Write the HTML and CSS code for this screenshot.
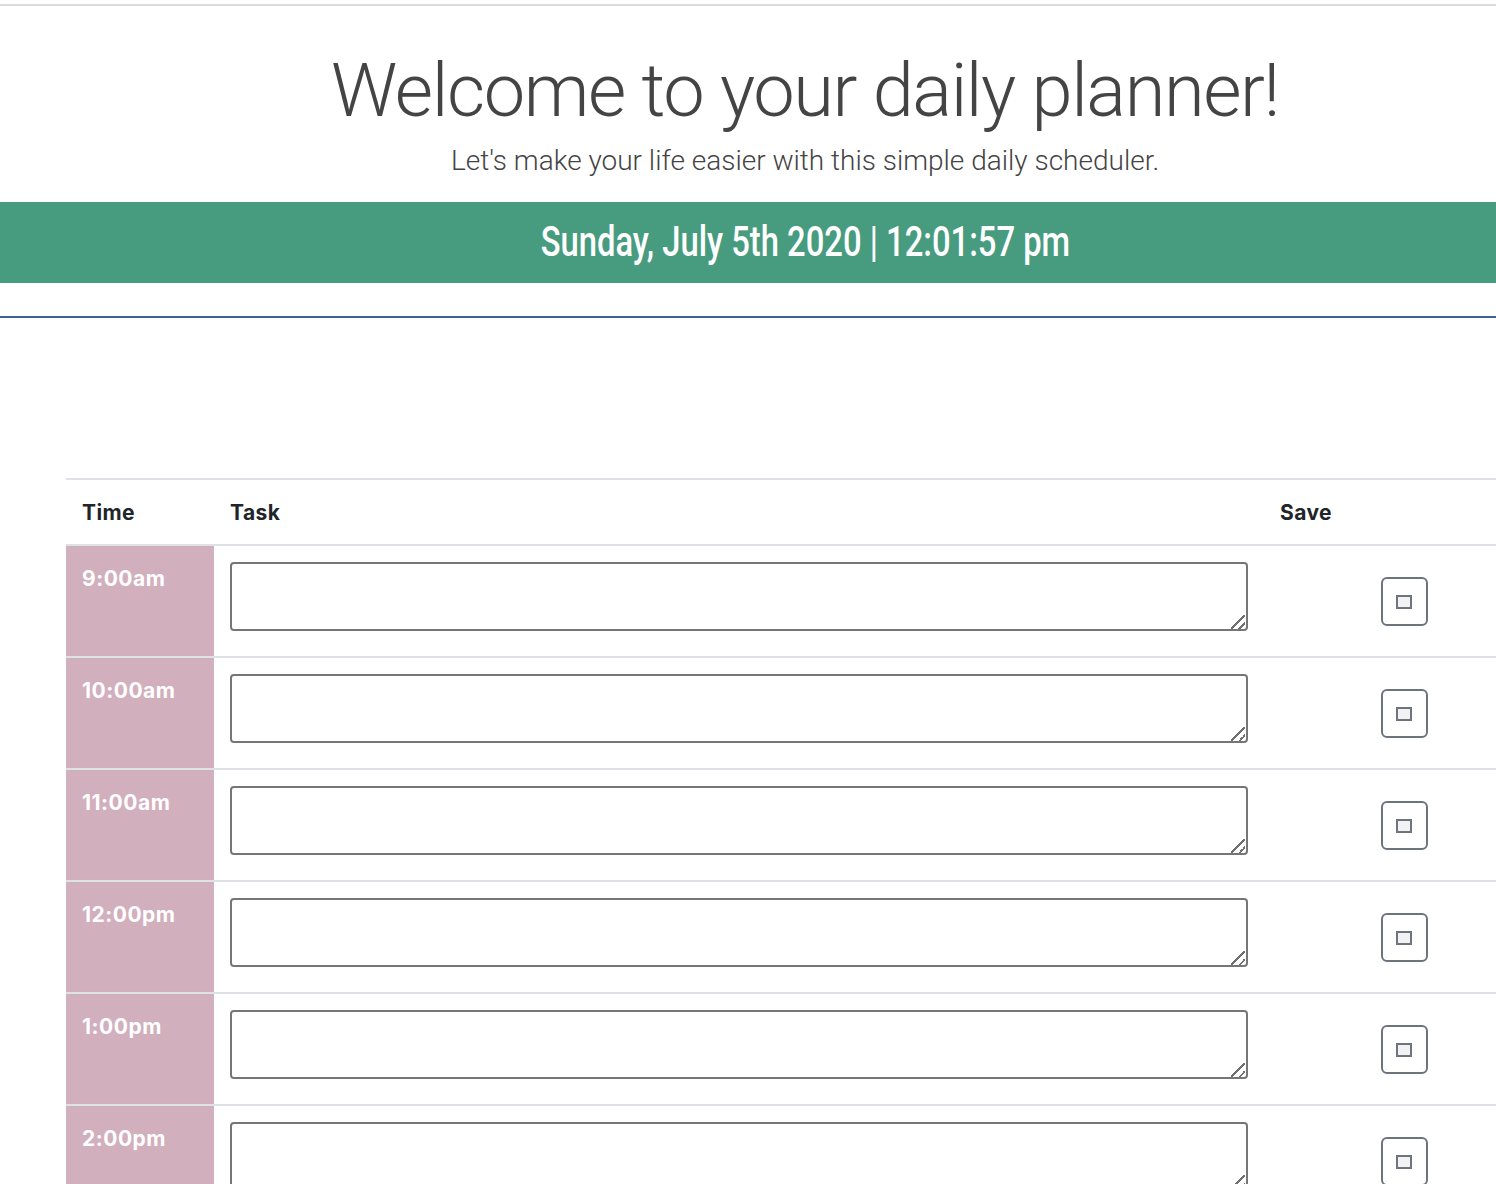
FILE: index.html
```html
<!DOCTYPE html>
<html lang="en">
<head>
<meta charset="utf-8">
<title>Daily Planner</title>
<link rel="stylesheet" href="styles.css">
</head>
<body>
<div class="page">
<div class="topline"></div>
<header class="jumbo">
  <h1 class="title">Welcome to your daily planner!</h1>
  <p class="lead">Let's make your life easier with this simple daily scheduler.</p>
</header>
<div class="datebar"><span class="datetext">Sunday, July 5th 2020 | 12:01:57 pm</span></div>
<hr class="divider">
<main class="planner">
  <table class="table">
    <thead>
      <tr><th class="c-time">Time</th><th class="c-task">Task</th><th class="c-save">Save</th></tr>
    </thead>
    <tbody>
      <tr><td class="hour">9:00am</td><td class="task"><div class="fieldwrap"><textarea class="field"></textarea></div></td><td class="save"><button class="savebtn"><span class="ico"></span></button></td></tr>
      <tr><td class="hour">10:00am</td><td class="task"><div class="fieldwrap"><textarea class="field"></textarea></div></td><td class="save"><button class="savebtn"><span class="ico"></span></button></td></tr>
      <tr><td class="hour">11:00am</td><td class="task"><div class="fieldwrap"><textarea class="field"></textarea></div></td><td class="save"><button class="savebtn"><span class="ico"></span></button></td></tr>
      <tr><td class="hour">12:00pm</td><td class="task"><div class="fieldwrap"><textarea class="field"></textarea></div></td><td class="save"><button class="savebtn"><span class="ico"></span></button></td></tr>
      <tr><td class="hour">1:00pm</td><td class="task"><div class="fieldwrap"><textarea class="field"></textarea></div></td><td class="save"><button class="savebtn"><span class="ico"></span></button></td></tr>
      <tr><td class="hour">2:00pm</td><td class="task"><div class="fieldwrap"><textarea class="field"></textarea></div></td><td class="save"><button class="savebtn"><span class="ico"></span></button></td></tr>
    </tbody>
  </table>
</main>
</div>
</body>
</html>
```
FILE: styles.css
```css
html, body {
  margin: 0;
  padding: 0;
  background: #fff;
  overflow: hidden;
}
body {
  font-family: Roboto, "Liberation Sans", sans-serif;
  color: #212529;
}
.page {
  width: 1610px;
}
.topline {
  height: 2px;
  margin-top: 4px;
  background: #dcdcdf;
}
.jumbo {
  text-align: center;
  padding: 48px 0 0;
  box-sizing: border-box;
  height: 196px;
}
.title {
  margin: 0;
  font-size: 74px;
  font-weight: 300;
  line-height: 1;
  color: #444;
  letter-spacing: -1.4px;
}
.lead {
  margin: 16px 0 0;
  font-size: 28px;
  font-weight: 300;
  line-height: 1.2;
  color: #444;
}
.datebar {
  height: 81px;
  background: #479b7f;
  display: flex;
  align-items: center;
  justify-content: center;
}
.datetext {
  display: inline-block;
  color: #fff;
  font-family: Roboto, sans-serif;
  font-weight: 500;
  font-size: 42px;
  transform: scaleX(0.78);
  white-space: nowrap;
  padding-bottom: 3px;
}
.divider {
  margin: 33px 0 0;
  border: 0;
  height: 2px;
  background: #3f6295;
}
.planner {
  padding: 160px 66px 0;
}
.table {
  width: 100%;
  border-collapse: collapse;
  font-family: Inter, "Liberation Sans", sans-serif;
}
.table th {
  text-align: left;
  font-size: 21px;
  font-weight: 700;
  letter-spacing: 0.4px;
  color: #212529;
  padding: 0 16px;
  height: 64px;
  border-top: 2px solid #dee2e6;
  border-bottom: 2px solid #dee2e6;
}
.c-time { width: 116px; }
.c-save { width: 248px; }
.table td {
  border-top: 2px solid #dee2e6;
  vertical-align: top;
  height: 112px;
  box-sizing: border-box;
  padding: 0;
}
.hour {
  background: #d2afbc;
  color: #fff;
  font-size: 21px;
  font-weight: 700;
  letter-spacing: 0.5px;
  padding: 20px 16px 0 !important;
}
.task {
  padding: 16px 16px 0 !important;
}
.fieldwrap {
  position: relative;
}
.fieldwrap::after {
  content: "";
  position: absolute;
  right: 3px;
  bottom: 2px;
  width: 14px;
  height: 14px;
  background: linear-gradient(135deg, transparent 0 46%, #6f6f6f 46% 54%, transparent 54% 75%, #6f6f6f 75% 83%, transparent 83%);
  pointer-events: none;
}
.field {
  display: block;
  width: 100%;
  height: 69px;
  box-sizing: border-box;
  border: 2px solid #767676;
  border-radius: 4px;
  margin: 0;
  padding: 4px;
  font-family: inherit;
  background: #fff;
  resize: none;
}
.save {
  padding: 31px 0 0 !important;
  text-align: center;
}
.savebtn {
  width: 47px;
  height: 49px;
  border: 2px solid #6c757d;
  border-radius: 6px;
  background: #fff;
  padding: 0;
  display: inline-flex;
  align-items: center;
  justify-content: center;
}
.ico {
  display: block;
  width: 16px;
  height: 14px;
  box-sizing: border-box;
  border: 2px solid #6c757d;
  background: #f2f2f2;
}
```
